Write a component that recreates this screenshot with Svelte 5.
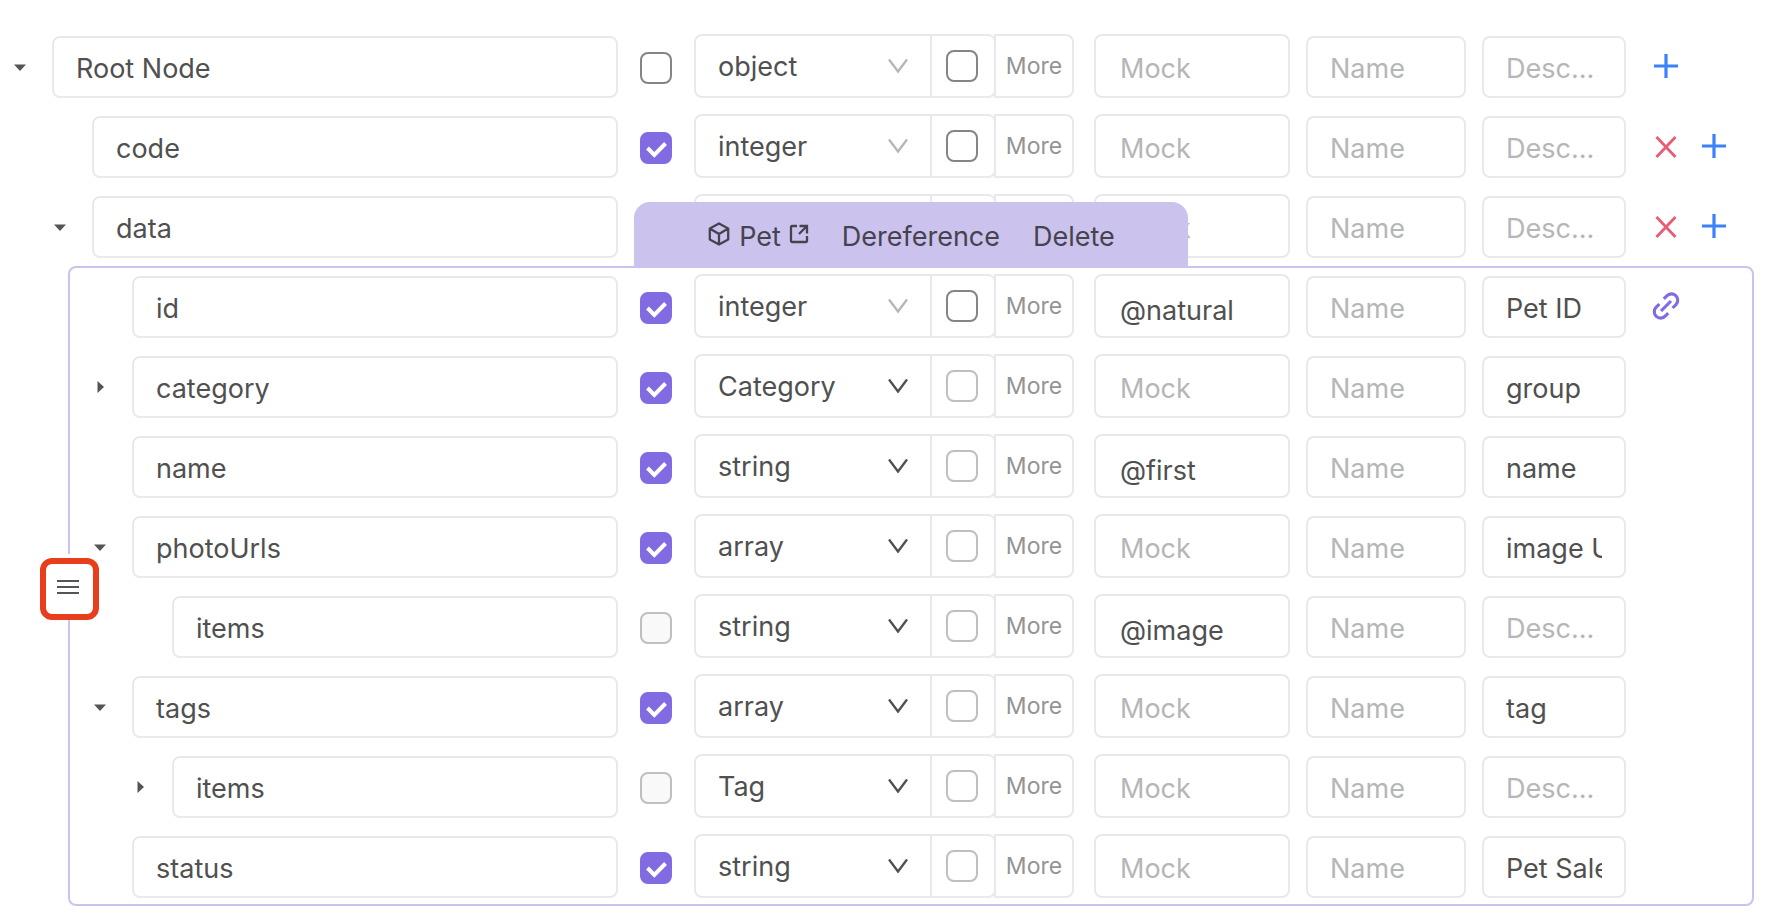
<script>
  const rootRows = [
    { id: 'root', name: 'Root Node', depth: 0, caret: 'down', required: false, type: 'object', mock: '', desc: '', actions: ['add'] },
    { id: 'code', name: 'code', depth: 1, caret: '', required: true, type: 'integer', mock: '', desc: '', actions: ['remove', 'add'] },
    { id: 'data', name: 'data', depth: 1, caret: 'down', required: true, type: '', mock: '', desc: '', actions: ['remove', 'add'] },
  ];

  const petRows = [
    { id: 'pet-id', name: 'id', depth: 0, caret: '', required: true, type: 'integer', mock: '@natural', desc: 'Pet ID', actions: ['link'] },
    { id: 'pet-category', name: 'category', depth: 0, caret: 'right', required: true, type: 'Category', locked: true, mock: '', desc: 'group', actions: [] },
    { id: 'pet-name', name: 'name', depth: 0, caret: '', required: true, type: 'string', locked: true, mock: '@first', desc: 'name', actions: [] },
    { id: 'pet-photos', name: 'photoUrls', depth: 0, caret: 'down', required: true, type: 'array', locked: true, mock: '', desc: 'image URL', actions: [] },
    { id: 'pet-photo-items', name: 'items', depth: 1, caret: '', required: false, fixed: true, type: 'string', locked: true, mock: '@image', desc: '', actions: [] },
    { id: 'pet-tags', name: 'tags', depth: 0, caret: 'down', required: true, type: 'array', locked: true, mock: '', desc: 'tag', actions: [] },
    { id: 'pet-tag-items', name: 'items', depth: 1, caret: 'right', required: false, fixed: true, type: 'Tag', locked: true, mock: '', desc: '', actions: [] },
    { id: 'pet-status', name: 'status', depth: 0, caret: '', required: true, type: 'string', locked: true, mock: '', desc: 'Pet Sales Status', actions: [] },
  ];
</script>

{#snippet schemaRow(row)}
  <div class="row">
    <div class="name-cell" class:nested={row.depth === 1}>
      {#if row.caret}
        <button class="caret" aria-label="Toggle {row.name}">
          <svg width="14" height="14" viewBox="0 0 14 14">
            {#if row.caret === 'down'}
              <path d="M1 4.500h12L7 11z" fill="#555" />
            {:else}
              <path d="M4.500 1v12L11 7z" fill="#555" />
            {/if}
          </svg>
        </button>
      {:else}
        <span class="caret"></span>
      {/if}
      <input class="field" type="text" aria-label="Field name" value={row.name} />
    </div>
    <input class="check required" type="checkbox" aria-label="Required" checked={row.required} disabled={row.fixed} />
    <div class="type-group">
      <div class="type">
        <select aria-label="Type">
          <option>{row.type}</option>
        </select>
        <svg class="chevron" class:strong={row.locked} width="22" height="16" viewBox="0 0 22 16">
          <path d="M2 1.500L11 13.500L20 1.500" fill="none" stroke="currentColor" stroke-width="2.300" />
        </svg>
      </div>
      <div class="null-cell">
        <input class="check" class:pale={row.locked} type="checkbox" aria-label="Allow null" />
      </div>
      <button class="more">More</button>
    </div>
    <input class="field mock" class:filled={row.mock} type="text" aria-label="Mock" placeholder="Mock" value={row.mock} />
    <input class="field" type="text" aria-label="Name" placeholder="Name" />
    <input class="field" type="text" aria-label="Description" placeholder="Desc..." value={row.desc} />
    <div class="actions">
      {#each row.actions as action}
        {#if action === 'add'}
          <button aria-label="Add field">
            <svg width="28" height="28" viewBox="0 0 28 28">
              <path d="M14 2v24M2 14h24" stroke="#3b82f6" stroke-width="3.200" />
            </svg>
          </button>
        {:else if action === 'remove'}
          <button class="remove" aria-label="Remove field">
            <svg width="28" height="28" viewBox="0 0 28 28">
              <path d="M4.500 4L23.500 24M23.500 4L4.500 24" stroke="#e85d75" stroke-width="2.800" />
            </svg>
          </button>
        {:else}
          <button aria-label="Referenced model">
            <svg width="28" height="28" viewBox="0 0 28 28" fill="none" stroke="#826ae2" stroke-width="3.100">
              <path d="M9 19L19 9" />
              <path d="M11.800 6.800L14.800 3.900A5.900 5.900 0 0 1 24 12.600L20.600 16" />
              <path d="M16.200 21.200L13.200 24.100A5.900 5.900 0 0 1 4 15.400L7.400 12" />
            </svg>
          </button>
        {/if}
      {/each}
    </div>
  </div>
{/snippet}

<main class="editor">
  {#each rootRows as row (row.id)}
    {@render schemaRow(row)}
  {/each}

  <section class="model" aria-label="Pet model">
    <div class="model-bar">
      <a class="model-link" href="#pet">
        <svg width="24" height="26" viewBox="0 0 24 26" fill="none" stroke="currentColor" stroke-width="2.300" stroke-linejoin="round">
          <path d="M12 2.500L21.200 7.500V18.500L12 23.500L2.800 18.500V7.500zM2.800 7.500L12 13L21.200 7.500M12 13V23.500" />
        </svg>
        <span>Pet</span>
        <svg width="20" height="20" viewBox="0 0 20 20" fill="none" stroke="currentColor" stroke-width="2.300">
          <path d="M8 2H3Q2 2 2 3V17Q2 18 3 18H17Q18 18 18 17V12M10.500 2H18V9.500M18 2L10 10" />
        </svg>
      </a>
      <button>Dereference</button>
      <button>Delete</button>
    </div>

    {#each petRows as row (row.id)}
      {@render schemaRow(row)}
    {/each}

    <button class="handle" aria-label="Model menu">
      <svg width="24" height="18" viewBox="0 0 24 18">
        <path d="M1 3h22M1 9h22M1 15h22" stroke="#555" stroke-width="2.200" />
      </svg>
    </button>
  </section>
</main>

<style>
  :global(body) {
    background: #fff;
  }

  .editor,
  .editor * {
    box-sizing: border-box;
  }

  .editor {
    display: flex;
    flex-direction: column;
    gap: 16px;
    padding: 34px 0 16px;
    color: #505050;
    font: 27px/36px Inter, 'Liberation Sans', sans-serif;
  }

  button,
  input,
  select {
    margin: 0;
    color: inherit;
    font: inherit;
  }

  button {
    padding: 0;
    border: 0;
    background: none;
    cursor: pointer;
  }

  svg {
    display: block;
    flex: none;
  }

  .row {
    display: grid;
    grid-template-columns: minmax(0, 1fr) 44px 380px 200px 160px 144px 110px;
    column-gap: 16px;
    align-items: end;
    height: 64px;
  }

  .editor > .row {
    padding: 0 28px 0 8px;
  }

  .name-cell {
    display: flex;
    align-items: center;
  }

  .name-cell.nested {
    padding-left: 40px;
  }

  .caret {
    display: flex;
    flex: none;
    justify-content: center;
    width: 24px;
    margin-right: 20px;
  }

  .field {
    width: 100%;
    min-width: 0;
    height: 62px;
    padding: 2px 22px 0;
    border: 2px solid #e9e9e9;
    border-radius: 8px;
    outline: none;
    background: #fff;
  }

  .field::placeholder {
    color: #b6b6b6;
    opacity: 1;
  }

  .check {
    display: block;
    width: 32px;
    height: 32px;
    border: 2px solid #858585;
    border-radius: 8px;
    appearance: none;
    background: #fff;
  }

  .check.pale {
    border-color: #bfbfbf;
  }

  .check:disabled {
    border-color: #bfbfbf;
    background: #f9f9f9;
  }

  .check:checked {
    border-color: #826ae2;
    background: #826ae2 url("data:image/svg+xml,%3Csvg xmlns='http://www.w3.org/2000/svg' viewBox='0 0 28 28'%3E%3Cpath d='M5.500 14L12.300 20.800L23.500 9.500' fill='none' stroke='white' stroke-width='4'/%3E%3C/svg%3E") center / 28px 28px no-repeat;
  }

  .required {
    justify-self: center;
    margin-bottom: 14px;
  }

  .type-group {
    display: flex;
    height: 64px;
  }

  .type {
    position: relative;
    flex: 1;
    min-width: 0;
  }

  .type select {
    width: 100%;
    height: 64px;
    padding: 2px 52px 0 22px;
    border: 2px solid #e9e9e9;
    border-radius: 8px 0 0 8px;
    outline: none;
    appearance: none;
    background: #fff;
  }

  .chevron {
    position: absolute;
    top: 24px;
    right: 23px;
    color: #b6b6b6;
    pointer-events: none;
  }

  .chevron.strong {
    color: #505050;
  }

  .null-cell {
    width: 66px;
    margin-left: -2px;
    padding: 14px;
    border: 2px solid #e9e9e9;
    border-radius: 0 8px 8px 0;
  }

  .more {
    width: 80px;
    margin-left: -2px;
    border: 2px solid #e9e9e9;
    border-radius: 0 8px 8px 0;
    color: #949494;
    font-size: 23px;
  }

  .mock {
    justify-self: end;
    width: 196px;
    height: 64px;
    padding: 4px 24px 0;
  }

  .mock.filled {
    padding-top: 8px;
  }

  .actions {
    display: flex;
    align-items: center;
    gap: 20px;
    height: 64px;
    padding-left: 10px;
  }

  .remove {
    padding-top: 2px;
  }

  .model {
    position: relative;
    display: flex;
    flex-direction: column;
    gap: 16px;
    margin: -8px 26px 0 68px;
    padding: 6px 0 6px 18px;
    border: 2px solid #cbc3ee;
    border-radius: 8px;
  }

  .model-bar {
    position: absolute;
    right: 564px;
    bottom: 100%;
    display: flex;
    align-items: center;
    justify-content: center;
    gap: 33px;
    width: 554px;
    height: 66px;
    padding-top: 4px;
    border-radius: 16px 16px 0 0;
    background: #cbc3ee;
    color: #46434f;
  }

  .model-link {
    display: flex;
    align-items: center;
    gap: 8px;
    color: inherit;
    text-decoration: none;
  }

  .model-link svg {
    margin-bottom: 6px;
  }

  .handle {
    position: absolute;
    top: 290px;
    left: -30px;
    display: grid;
    place-items: center;
    width: 59px;
    height: 62px;
    padding: 0 4px 4px 0;
    border: 6px solid #e83e1c;
    border-radius: 12px;
    background: #fff;
    box-shadow: 0 -4px 0 #fff;
  }
</style>
